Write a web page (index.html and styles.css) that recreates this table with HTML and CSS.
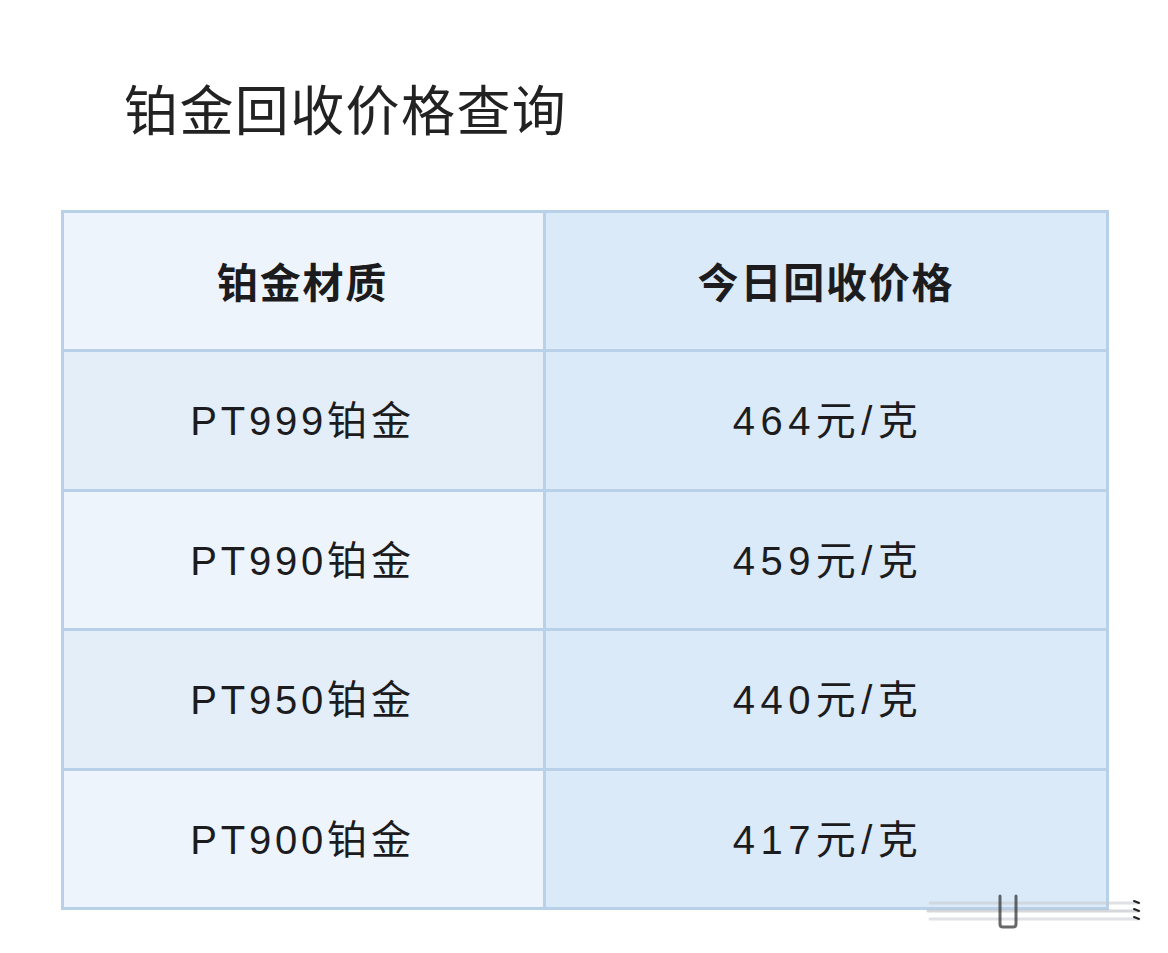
FILE: index.html
```html
<!DOCTYPE html>
<html lang="zh">
<head>
<meta charset="utf-8">
<title>铂金回收价格查询</title>
<link rel="stylesheet" href="styles.css">
</head>
<body>
<div class="page">
  <h1 class="title">铂金回收价格查询</h1>
  <div class="table">
    <div class="cell head left">铂金材质</div>
    <div class="cell head right">今日回收价格</div>
    <div class="cell left alt">PT999铂金</div>
    <div class="cell right">464元/克</div>
    <div class="cell left">PT990铂金</div>
    <div class="cell right">459元/克</div>
    <div class="cell left alt">PT950铂金</div>
    <div class="cell right">440元/克</div>
    <div class="cell left">PT900铂金</div>
    <div class="cell right">417元/克</div>
  </div>
  <svg class="mark" width="230" height="40" viewBox="0 0 230 40">
    <g stroke-linecap="round">
      <line x1="5" y1="11" x2="214" y2="11" stroke="#c6cacd" stroke-width="3" opacity="0.55"/>
      <line x1="3" y1="19" x2="214" y2="19" stroke="#b4b8bc" stroke-width="3" opacity="0.55"/>
      <line x1="5" y1="27" x2="214" y2="27" stroke="#c8ccd0" stroke-width="3" opacity="0.55"/>
      <path d="M75 4 V32 Q75 35 78 35 H88 Q91 35 91 32 V4" fill="none" stroke="#2a2a2a" stroke-width="3" opacity="0.7"/>
      <path d="M209 9 L214 11 M209 17 L214 19 M209 25 L214 27" stroke="#222" stroke-width="2"/>
    </g>
  </svg>
</div>
</body>
</html>
```

FILE: styles.css
```css
html, body {
  margin: 0;
  padding: 0;
  background: #ffffff;
}

.page {
  position: relative;
  width: 1168px;
  height: 953px;
  padding-top: 78px;
  box-sizing: border-box;
  font-family: "Liberation Sans", "Noto Sans CJK SC", sans-serif;
  color: #1c1c1e;
}

.title {
  margin: 0 0 0 124px;
  font-family: "Noto Sans CJK SC", sans-serif;
  font-weight: 400;
  font-size: 54px;
  line-height: 60px;
  letter-spacing: 1.4px;
  color: #222;
}

.table {
  margin: 72px 0 0 61px;
  width: 1048px;
  display: grid;
  grid-template-columns: 479px 560px;
  grid-template-rows: 136px 137px 136px 137px 136px;
  gap: 3px;
  padding: 3px;
  box-sizing: border-box;
  background: #b8d0e8;
}

.cell {
  display: flex;
  align-items: center;
  justify-content: center;
  padding-bottom: 5px;
  font-size: 40px;
  letter-spacing: 3.8px;
  color: #1c1c1e;
}

.cell.left {
  background: #edf4fb;
  padding-right: 2px;
}

.cell.left.alt {
  background: #e3eef9;
}

.cell.right {
  background: #dbeaf9;
  letter-spacing: 5.4px;
  padding-left: 4px;
}

.cell.head {
  font-family: "Noto Sans CJK SC", sans-serif;
  font-weight: 700;
  font-size: 41px;
  letter-spacing: 1.8px;
  padding-bottom: 2px;
}

.cell.head.right {
  letter-spacing: 1.8px;
  padding-left: 0;
}

.mark {
  position: absolute;
  left: 925px;
  top: 892px;
}
```
